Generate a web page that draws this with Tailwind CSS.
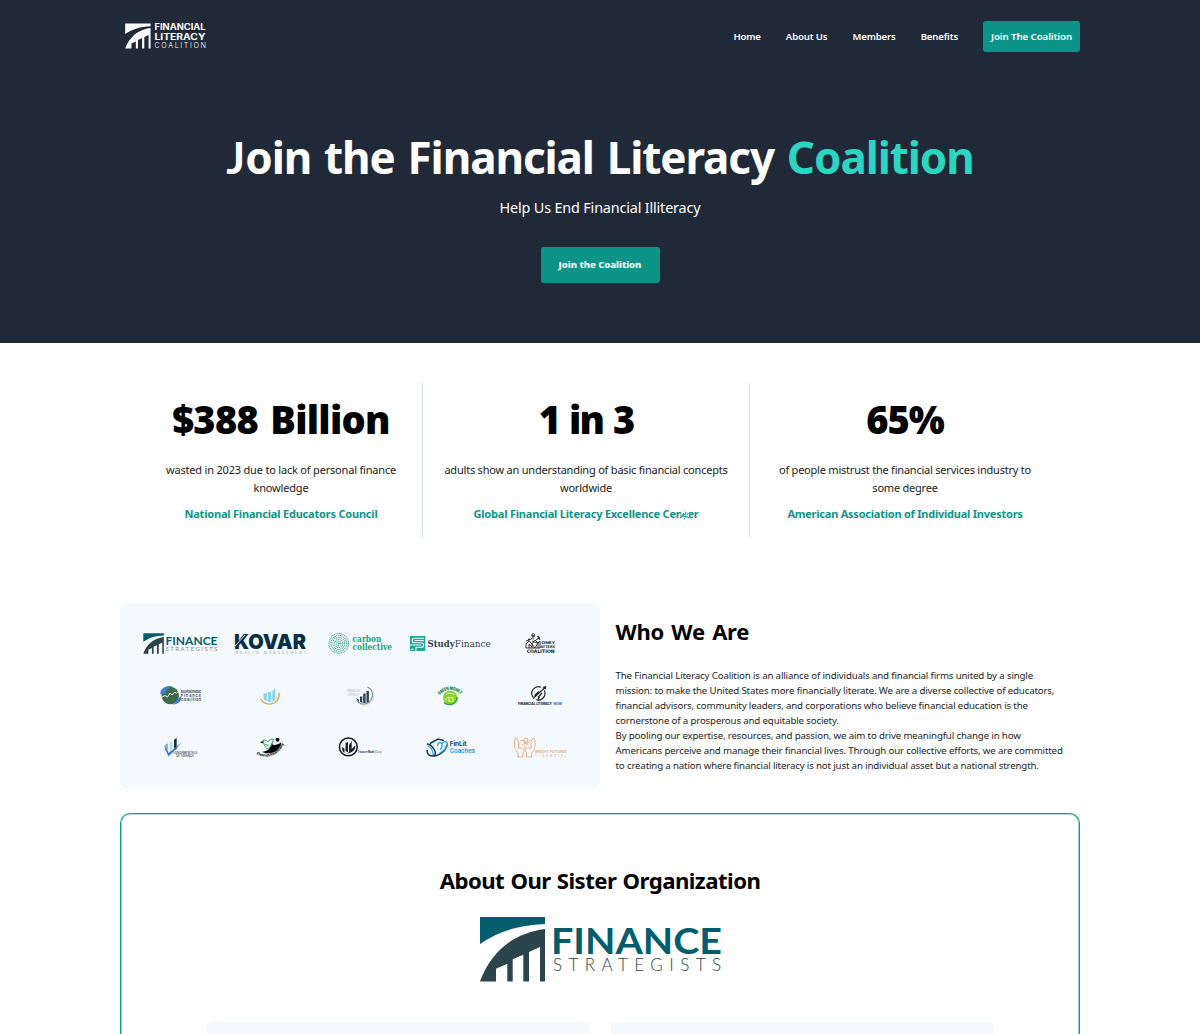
<!DOCTYPE html>
<html lang="en">
<head>
<meta charset="utf-8">
<title>Financial Literacy Coalition</title>
<script src="https://cdn.jsdelivr.net/npm/@tailwindcss/browser@4"></script>
</head>
<body class="h-[1034px] overflow-hidden bg-white font-['Noto_Sans',sans-serif] text-black">
<svg class="hidden">
  <defs>
    <g id="bridge">
      <path class="fill-(--roof)" d="M0 0H65V7C39 8 19 14 0 27Z"/>
      <path class="fill-(--base)" d="M65 12V64.5H60V30L49 35V64.5H43.3V37.7L32.7 42.3V64.5H27.3V46.7L16 51.7V64.5H0C11 34 34 16 65 12Z"/>
    </g>
  </defs>
</svg>

<header class="h-[343px] bg-[#1f2937] text-white">
  <nav class="mx-auto flex h-[72px] w-[960px] items-center justify-between">
    <svg class="ml-1 h-[30px] w-[84px] [--base:#fff] [--roof:#fff]" viewBox="124 21 84 30">
      <use href="#bridge" transform="translate(125.2 23.4) scale(.39)"/>
      <g fill="#fff" font-family="Inter, sans-serif" font-weight="700">
        <text x="154.5" y="30" font-size="8.4" textLength="51" lengthAdjust="spacingAndGlyphs">FINANCIAL</text>
        <text x="154.5" y="39.6" font-size="8.4" textLength="51" lengthAdjust="spacingAndGlyphs">LITERACY</text>
        <text x="154.5" y="48" font-size="7.2" font-weight="300" textLength="51.5">COALITION</text>
      </g>
    </svg>
    <div class="flex items-center text-[9.6px] font-semibold tracking-[-0.15px] whitespace-nowrap">
      <a class="mt-0.5 mr-[25px]">Home</a>
      <a class="mt-0.5 mr-[25px]">About Us</a>
      <a class="mt-0.5 mr-[25px]">Members</a>
      <a class="mt-0.5 mr-[25px]">Benefits</a>
      <a class="flex h-[31px] w-[97px] items-center justify-center rounded-[3px] bg-[#0d9488] pt-0.5 text-[9.7px] tracking-[-0.08px]">Join The Coalition</a>
    </div>
  </nav>
  <div class="flex flex-col items-center pt-[61px]">
    <h1 class="text-[44px] leading-[48px] font-bold tracking-[-1.1px] whitespace-nowrap [word-spacing:2.5px]"><span class="font-['Lato',sans-serif] tracking-normal">J</span>oin the Financial Literacy <span class="text-[#2dd4bf]">Coalition</span></h1>
    <p class="mt-[17px] text-[14.4px] leading-5 tracking-[-0.17px]">Help Us End Financial Illiteracy</p>
    <a class="mt-[29px] flex h-9 w-[119px] items-center justify-center rounded-[3px] bg-[#0d9488] text-[9.6px] font-extrabold tracking-[-0.05px]">Join the Coalition</a>
  </div>
</header>

<section class="mx-auto mt-10 flex h-[155px] w-[920px] text-center whitespace-nowrap">
  <div class="w-[283px] border-r border-[#dbe5ee] pt-4">
    <p class="text-[38px] leading-10 font-black tracking-[-0.7px] [word-spacing:3px]">$388 Billion</p>
    <p class="mt-[22px] text-[11px] leading-[17.5px] tracking-[-0.19px] text-[#222]">wasted in 2023 due to lack of personal finance<br>knowledge</p>
    <p class="mt-[9px] text-[11px] leading-[18px] font-bold tracking-[-0.2px] text-[#0d9488]">National Financial Educators Council</p>
  </div>
  <div class="w-[327px] border-r border-[#dbe5ee] pt-4">
    <p class="text-[38px] leading-10 font-black tracking-[-1.9px] [word-spacing:2px]">1 in 3</p>
    <p class="mt-[22px] text-[11px] leading-[17.5px] tracking-[-0.21px] text-[#222]">adults show an understanding of basic financial concepts<br>worldwide</p>
    <p class="mt-[9px] text-[11px] leading-[18px] font-bold tracking-[-0.2px] text-[#0d9488]">Global Financial Literacy Excellence Ce<span class="relative">nt<svg class="absolute top-[4px] left-[4px] h-[11px] w-[10px]" viewBox="0 0 10 11"><path fill="#fff" d="M1 1h8v9H1z"/><path fill="none" stroke="#12a093" stroke-width="1.200" d="M0 8l3-2 3 1M3 3l1.500 2M6 2L5 5M8.500 3L7 5M1 5h3M6 6l3 2M4 9l1-1"/></svg></span>er</p>
  </div>
  <div class="w-[310px] pt-4">
    <p class="text-[38px] leading-10 font-black tracking-[-1px]">65%</p>
    <p class="mt-[22px] text-[11px] leading-[17.5px] tracking-[-0.22px] text-[#222]">of people mistrust the financial services industry to<br>some degree</p>
    <p class="mt-[9px] text-[11px] leading-[18px] font-bold tracking-[-0.23px] text-[#0d9488]">American Association of Individual Investors</p>
  </div>
</section>

<section class="mx-auto mt-[65px] flex w-[960px]">
  <div class="grid h-[185px] w-[480px] grid-cols-[repeat(5,90px)] grid-rows-[repeat(3,52px)] rounded-md bg-[#f4f9fe] px-[15px] py-[14px]">
    <!-- Finance Strategists -->
    <svg class="[--base:#2c444b] [--roof:#045d6c]" viewBox="0 0 90 52">
      <use href="#bridge" transform="translate(8.300 16.300) scale(.316)"/>
      <g font-family="Lato, sans-serif">
        <text x="30.500" y="27.700" font-size="11.200" font-weight="700" fill="#045d6c" textLength="52" lengthAdjust="spacingAndGlyphs">FINANCE</text>
        <text x="30.500" y="33.700" font-size="6" fill="#7c8a90" textLength="52">STRATEGISTS</text>
      </g>
    </svg>
    <!-- Kovar -->
    <svg viewBox="0 0 90 52" font-family="Inter, sans-serif">
      <text x="9" y="31.600" font-size="20.500" font-weight="900" fill="#0d2f45" textLength="72" lengthAdjust="spacingAndGlyphs">KOVAR</text>
      <path stroke="#f4f9fe" stroke-width=".9" d="M10 29L20 18"/>
      <text x="10" y="36.900" font-size="3.500" fill="#969fa8" textLength="71">WEALTH MANAGEMENT</text>
    </svg>
    <!-- Carbon Collective -->
    <svg viewBox="0 0 90 52" font-family="'DejaVu Serif', serif">
      <g fill="none" stroke="#2aa67f" stroke-width="1.200" stroke-linecap="round">
        <circle cx="23.800" cy="26.400" r="9.800" stroke-dasharray="0 1.800"/>
        <circle cx="23.800" cy="26.400" r="7.900" stroke-dasharray="0 1.840"/>
        <circle cx="23.800" cy="26.400" r="6" stroke-dasharray="0 1.800"/>
        <circle cx="23.800" cy="26.400" r="4.100" stroke-dasharray="0 1.840"/>
        <circle cx="23.800" cy="26.400" r="2.200" stroke-dasharray="0 1.720"/>
        <circle cx="23.800" cy="26.400" r=".4"/>
      </g>
      <g font-size="8.600" font-weight="700" fill="#21a278">
        <text x="37.500" y="24.800" textLength="29" lengthAdjust="spacingAndGlyphs">carbon</text>
        <text x="37.500" y="33" textLength="39.500" lengthAdjust="spacingAndGlyphs">collective</text>
      </g>
    </svg>
    <!-- StudyFinance -->
    <svg viewBox="0 0 90 52" font-family="'DejaVu Serif', serif" font-size="9.800" fill="#3a4254">
      <path fill="#1ea595" d="M5 19h15.300v15H5z"/>
      <path fill="none" stroke="#f4f9fe" stroke-width="1.100" d="M19 21.200H9.500a2.300 2.300 0 0 0 0 4.600h6.800a2.300 2.300 0 0 1 0 4.600H11V34M19 23.500H9.500M5 28h11.200M6 32.300h2.500"/>
      <text x="22.500" y="30" font-weight="700" textLength="27.300" lengthAdjust="spacingAndGlyphs">Study</text>
      <text x="49.800" y="30" textLength="36" lengthAdjust="spacingAndGlyphs">Finance</text>
    </svg>
    <!-- Money Matters Coalition -->
    <svg viewBox="0 0 90 52" fill="#222" font-family="'DejaVu Sans', sans-serif">
      <path fill="none" stroke="#333" stroke-width="1" d="M31 31v-4l3-3 3 3 3-4 3 3 2-2v7zM34 31v-4l3 3M37 31v-4l3 4 3-5v5M38 17.500v5M36.500 19h3.500M42 20l2-1M41 23l3-2 1 2M35 22.500l2-1M31 24l3-1M37 24l5 2"/>
      <circle cx="38.300" cy="18" r="1.500" fill="none" stroke="#333" stroke-width=".8"/>
      <circle cx="44" cy="20.500" r="1"/><circle cx="34" cy="22.500" r="1"/>
      <text x="46.500" y="27.300" font-size="3.800" font-weight="700" textLength="13.500" lengthAdjust="spacingAndGlyphs">ONEY</text>
      <text x="45.500" y="31.200" font-size="3.500" font-weight="700" textLength="14.500" lengthAdjust="spacingAndGlyphs">ATTERS</text>
      <text x="31.700" y="36" font-size="4.800" font-weight="700" textLength="28" lengthAdjust="spacingAndGlyphs">COALITION</text>
    </svg>

    <!-- Sustainable Finance Coalition -->
    <svg viewBox="0 0 90 52" font-family="Inter, sans-serif">
      <circle cx="35.300" cy="26.500" r="8.700" fill="#40694a"/>
      <path fill="#3f7fcf" d="M25.300 25.500c-.5-6 6-10 13-7.800-5 .4-7 3.400-7.500 6.300zM46 27.500c1 5-3 8-9.500 8.300 4-1 5-3 5.500-5.800z"/>
      <path fill="none" stroke="#e5f1ee" d="M27 28l3-1.500 2.500 1.500 2.500-4 2 2 3-3 1.500 1 3-2"/>
      <g font-size="3.800" font-weight="600" fill="#2c3747">
        <text x="45.700" y="23.800" textLength="20.500" lengthAdjust="spacingAndGlyphs">Sustainable</text>
        <text x="45.700" y="27.900" textLength="20.300">Finance</text>
        <text x="45.700" y="31.900" textLength="20.500">Coalition</text>
      </g>
    </svg>
    <!-- Bar chart over orange arc -->
    <svg viewBox="0 0 90 52">
      <path fill="#85d8ed" d="M38.500 25l3.300-1.200V32l-3.300-1zM42.700 23.500l3.600-1.200v11l-3.600-.5zM47.300 22l2.300-2 .7-2v13l-3 1.700z"/>
      <path fill="none" stroke="#e0a14d" stroke-width="1.300" stroke-linecap="round" d="M35.500 30c4 7.500 18.500 7.500 18.700-5.500"/>
    </svg>
    <!-- Bar chart over olive arc -->
    <svg viewBox="0 0 90 52" font-family="Inter, sans-serif">
      <path fill="#2c4258" d="M41 29l3 1.500v3.200zM45 27.500h2.300v6.500L45 33zM48.200 24.500h2.400v9.700h-2.400zM51.500 22h2.400v11l-2.400 1z"/>
      <path fill="none" stroke="#7c9185" stroke-width="1.100" d="M42 31.500c5 7 15.500 3 15.500-6 0-4-2-6-5-7.500"/>
      <path fill="none" stroke="#d6cfa4" stroke-width=".8" d="M44 34.500c6 4 14.500 0 14.800-8 .1-3-1.300-6-3.800-7.500"/>
      <g font-size="3" fill="#a4acb4"><text x="32" y="23.200" textLength="14" lengthAdjust="spacingAndGlyphs">FINANCIAL</text><text x="32.500" y="27.300" textLength="12" lengthAdjust="spacingAndGlyphs">LITERACY</text></g>
    </svg>
    <!-- Green Money -->
    <svg viewBox="0 0 90 52">
      <path id="arc" fill="none" d="M34.500 26Q45 15.500 56 26"/>
      <circle cx="45.200" cy="28.800" r="7.100" fill="#86d12c"/>
      <path fill="none" stroke="#27a043" stroke-width="1.300" d="M39 33.500c5 4.500 13 1.500 13.300-5.500"/>
      <path fill="none" stroke="#eaf9d5" stroke-width="1" d="M41 26c2-2.500 6-2.500 8 0M42 28.500h5M44 28.500v4h4v-5M41 29v2.500"/>
      <text font-family="Inter, sans-serif" font-size="4.600" font-weight="900" fill="#138845"><textPath href="#arc" textLength="24" lengthAdjust="spacingAndGlyphs">GREEN MONEY</textPath></text>
    </svg>
    <!-- Financial Literacy Now -->
    <svg viewBox="0 0 90 52" font-family="Inter, sans-serif" font-size="3.700" font-weight="800">
      <path fill="none" stroke="#222" stroke-width="1.200" d="M46 18.200a6.700 6.700 0 0 0-8 10M49.300 21.500a6.700 6.700 0 0 1-8 9.300M38 29.500L50 18.500M39.500 26.500l4.500-4M43 28.500l4-4.500M42.500 31l2-3"/>
      <path fill="#222" d="M51.500 17l-4 1 3 2.800z"/>
      <text x="23" y="35.500" fill="#22262d" textLength="34" lengthAdjust="spacingAndGlyphs">FINANCIAL LITERACY</text>
      <text x="58.500" y="35.500" fill="#3c78e8" textLength="8.500" lengthAdjust="spacingAndGlyphs">NOW</text>
    </svg>

    <!-- Fundamentals of Finance -->
    <svg viewBox="0 0 90 52" font-family="Inter, sans-serif" font-size="3" font-weight="600" fill="#44536b">
      <path fill="#6fa9dd" d="M30.300 23.500l2.500-1.200v9.500l-2.500-2z"/>
      <path fill="#b7dce0" d="M34.800 21.500l2.500-1.200V30l-2.500 1.500z"/>
      <path fill="#152e58" d="M39 18.700l2.700-1.700v11L39 29.500z"/>
      <path fill="#3d74b9" d="M28.500 24l5.300 8L47.500 20.700 33.500 35.500z"/>
      <text x="38" y="32.500" textLength="24.500" lengthAdjust="spacingAndGlyphs">FUNDAMENTALS</text>
      <text x="41" y="35.900" textLength="18" lengthAdjust="spacingAndGlyphs">OF FINANCE</text>
    </svg>
    <!-- Flourish Financially -->
    <svg viewBox="0 0 90 52">
      <path id="smile" fill="none" d="M31.500 33.500Q50 41 59.500 22"/>
      <circle cx="52.500" cy="18.800" r="2"/>
      <path d="M37 31c6-1 8-3 9.500-9 2 3 4.500 2.500 10-.5-2 8-9.500 13.500-19.500 9.500zM35 21l3.500-1-1 2.500z"/>
      <path fill="none" stroke="#32a35e" d="M38 19c3 0 4 1 5 2 1-2 3-3 5.500-3-1 4-2 8-6.500 10-2-2-3.500-5-4-9zM40 23l2 1.500 2-1"/>
      <text font-family="Inter, sans-serif" font-size="3.900" font-weight="800"><textPath href="#smile" textLength="33" lengthAdjust="spacingAndGlyphs">Flourish Financially</textPath></text>
    </svg>
    <!-- Finance Made Easy -->
    <svg viewBox="0 0 90 52">
      <circle cx="33.300" cy="25.900" r="8.900" fill="none" stroke="#161616" stroke-width="1.500"/>
      <path fill="#222" d="M27 26l2.500 1.500v4.500c-2-1-2.500-3-2.500-6zM30.500 22l2.500-1v10.500l-2.500-1.500zM34 24l2.700-4v9L34 31.500zM37.500 27l3-2.500c0 4-3 7.500-8 8z"/>
      <text x="43" y="31.700" font-family="Inter, sans-serif" font-size="2.900" font-weight="700" fill="#30343c" textLength="16.500" lengthAdjust="spacingAndGlyphs">Finance Made</text>
      <text x="60" y="32" font-family="'Liberation Serif', serif" font-style="italic" font-size="4.800" fill="#555" textLength="7" lengthAdjust="spacingAndGlyphs">Easy</text>
    </svg>
    <!-- FinLit Coaches -->
    <svg viewBox="0 0 90 52" font-family="Inter, sans-serif" font-size="6.300" font-weight="700">
      <g fill="none" stroke="#17384d" stroke-width="1.500">
        <path d="M25 22.500l8-4.500 6 1.500M22 23c3 0 6 3 8 7 1 3 0 4-1 4.500M22 29c0 5 4 7 7 5.500"/>
        <path d="M29 35.300C36 34 41.500 29 42 23.500"/>
      </g>
      <g fill="none" stroke="#25a5dd" stroke-width="1.300">
        <path d="M33 25c-1-3 2-5 4-2 1-3 5-3.500 5.500 0 0 3.500-4 7.500-8.500 9.500M37 23v3.500l-2 2M23 25c3 1 4.500 4 5.500 9"/>
      </g>
      <text x="44.700" y="25.200" fill="#1c3b4e" textLength="17" lengthAdjust="spacingAndGlyphs">FinLit</text>
      <text x="44.700" y="32" fill="#1d9fd9" textLength="25.300" lengthAdjust="spacingAndGlyphs">Coaches</text>
    </svg>
    <!-- Bright Futures Financial -->
    <svg viewBox="0 0 90 52" font-family="Inter, sans-serif" fill="#dcae6e">
      <g fill="none" stroke="#f2a576" stroke-width=".9">
        <path d="M20 17.500c-1 4-1 8 .5 11l2.500 4v3.500h5v-4c2-2 1-5-1.500-5.500l-3 1V21l-1.500-3.500zM39.500 17.500c1 4 1 8-.5 11l-2.500 4v3.500h-5v-4c-2-2-1-5 1.500-5.500l3 1V21l1.500-3.500z"/>
        <circle cx="31" cy="19" r="2"/>
        <path d="M25 20l3-1 2 3h3l2-3M27 24l3-2 3.500 2M30 24v4"/>
      </g>
      <text x="40.300" y="32.200" font-size="3.900" font-weight="600" textLength="31.500" lengthAdjust="spacingAndGlyphs">BRIGHT FUTURES</text>
      <text x="40.500" y="36" font-size="2.900" textLength="31">FINANCIAL</text>
    </svg>
  </div>
  <div class="ml-[15.5px] whitespace-nowrap">
    <h2 class="mt-[13px] text-[22px] leading-[30px] font-bold tracking-[-0.3px] [word-spacing:2px]">Who We Are</h2>
    <p class="mt-[22px] text-[9.7px] leading-[15px] tracking-[-0.155px] text-[#1d1d1d]">The Financial Literacy Coalition is an alliance of individuals and financial firms united by a single<br>mission: to make the United States more financially literate. We are a diverse collective of educators,<br>financial advisors, community leaders, and corporations who believe financial education is the<br>cornerstone of a prosperous and equitable society.<br>By pooling our expertise, resources, and passion, we aim to drive meaningful change in how<br>Americans perceive and manage their financial lives. Through our collective efforts, we are committed<br>to creating a nation where financial literacy is not just an individual asset but a national strength.</p>
  </div>
</section>

<section class="mx-auto mt-[25px] flex h-[221px] w-[960px] flex-col items-center overflow-hidden rounded-t-[10px] border border-b-0 border-[#1a998c] shadow-[inset_0_1px_0_#b5e0dc,inset_1px_0_0_#8fd0c9,inset_-1px_0_0_#8fd0c9]">
  <h2 class="mt-[51px] text-[22.2px] leading-[32px] font-bold tracking-[-0.55px] whitespace-nowrap [word-spacing:1px]">About Our Sister Organization</h2>
  <svg class="mt-5 ml-0.5 h-[66px] w-[242px] shrink-0 [--base:#2c444b] [--roof:#045d6c]" viewBox="0 0 242 66">
    <use href="#bridge"/>
    <g font-family="Lato, sans-serif">
      <text x="71" y="36.500" font-size="36" font-weight="700" fill="#045d6c" textLength="171" lengthAdjust="spacingAndGlyphs">FINANCE</text>
      <text x="73" y="54" font-size="17" font-weight="300" fill="#2c444b" textLength="168">STRATEGISTS</text>
    </g>
  </svg>
  <div class="mt-[39px] flex h-3 shrink-0 gap-[21px]">
    <div class="w-[383px] rounded-t-[5px] bg-[#f4f9fe]"></div>
    <div class="w-[383px] rounded-t-[5px] bg-[#f4f9fe]"></div>
  </div>
</section>
</body>
</html>
